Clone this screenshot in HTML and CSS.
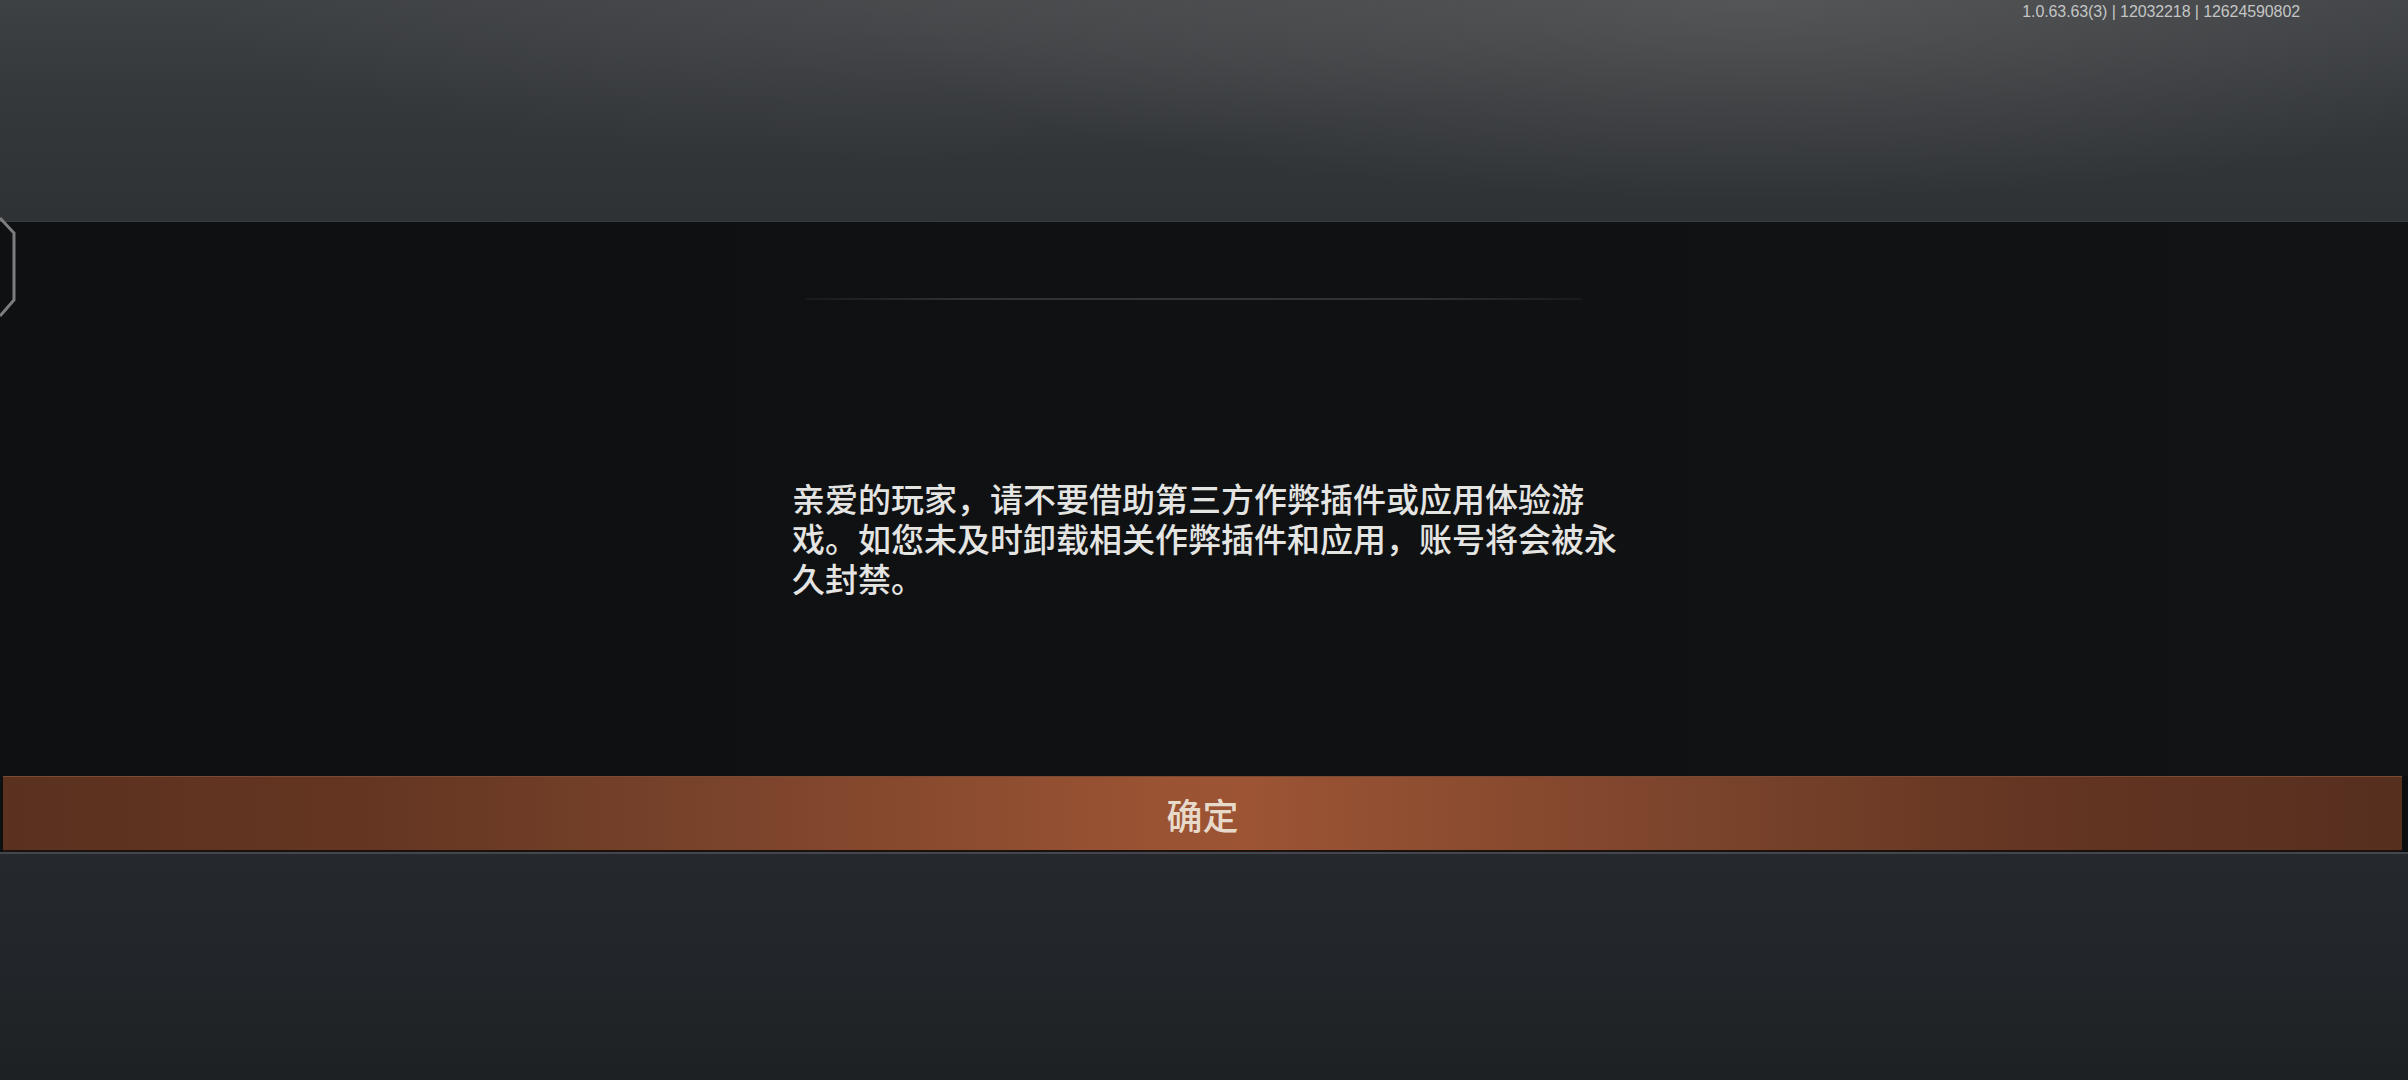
FILE: index.html
```html
<!DOCTYPE html>
<html lang="zh-CN">
<head>
<meta charset="utf-8">
<title>提示</title>
<link rel="stylesheet" href="styles.css">
</head>
<body>
<div class="screen">
  <header class="top-band">
    <div class="version">1.0.63.63(3) | 12032218 | 12624590802</div>
  </header>
  <section class="panel">
    <svg class="hex" width="20" height="104" viewBox="0 0 20 104" aria-hidden="true">
      <polyline points="0,2 14,17 14,84 0,100" fill="none" stroke="#7b7d7e" stroke-width="3"/>
    </svg>
    <div class="divider"></div>
    <p class="message">亲爱的玩家，请不要借助第三方作弊插件或应用体验游<br>戏。如您未及时卸载相关作弊插件和应用，账号将会被永<br>久封禁。</p>
  </section>
  <div class="button-row">
    <button class="confirm">确定</button>
  </div>
  <footer class="bottom-band"></footer>
</div>
</body>
</html>
```

FILE: styles.css
```css
html, body {
  margin: 0;
  padding: 0;
  background: #0e1011;
}

body {
  width: 2408px;
  height: 1080px;
  overflow: hidden;
  font-family: "Noto Sans CJK SC", "Noto Sans", sans-serif;
}

.screen {
  display: flex;
  flex-direction: column;
  width: 2408px;
  height: 1080px;
}

.top-band {
  height: 222px;
  display: flex;
  justify-content: flex-end;
  align-items: flex-start;
  padding-right: 108px;
  background:
    radial-gradient(ellipse 900px 200px at 1750px 0px, rgba(110, 110, 110, 0.45), rgba(110, 110, 110, 0) 100%),
    radial-gradient(ellipse 700px 160px at 900px 0px, rgba(90, 90, 92, 0.35), rgba(90, 90, 92, 0) 100%),
    linear-gradient(to bottom, #3e4144 0%, #35383b 45%, #2f3235 100%);
  border-bottom: 1px solid #3a3d40;
  box-sizing: border-box;
}

.version {
  margin-top: 1px;
  font-family: "Liberation Sans", Arial, sans-serif;
  font-size: 16px;
  line-height: 22px;
  color: #c4c5c5;
  letter-spacing: -0.1px;
}

.panel {
  position: relative;
  height: 554px;
  background:
    linear-gradient(to right, #0e1011 0%, #0f1112 60%, #111314 100%);
  display: flex;
  flex-direction: column;
  align-items: flex-start;
}

.hex {
  position: absolute;
  left: 0;
  top: -6px;
}

.divider {
  margin-top: 76px;
  margin-left: 806px;
  width: 776px;
  height: 2px;
  background: linear-gradient(to right, rgba(60, 62, 64, 0.2) 0%, #2e3032 20%, #333537 50%, #2e3032 80%, rgba(60, 62, 64, 0.2) 100%);
}

.message {
  margin: 178px 0 0 792px;
  font-size: 33px;
  line-height: 40px;
  color: #e4e4e2;
  font-weight: 500;
  white-space: nowrap;
}

.button-row {
  height: 76px;
  background: #0d0f10;
  display: flex;
  padding: 0 6px 0 3px;
}

.confirm {
  flex: 1;
  height: 76px;
  margin: 0;
  border: none;
  border-top: 1px solid #7a4a33;
  border-bottom: 2px solid #1c110c;
  box-sizing: border-box;
  background: linear-gradient(to right, #5a311f 0%, #643622 15%, #7a432b 30%, #9a5333 48%, #9c5434 52%, #7c442c 70%, #633522 85%, #572f1f 100%);
  color: #e8dacb;
  font-family: "Noto Sans CJK SC", sans-serif;
  font-size: 36px;
  font-weight: 500;
  line-height: 72px;
  padding: 0;
  text-align: center;
}

.bottom-band {
  flex: 1;
  border-top: 2px solid #43464d;
  background:
    linear-gradient(to bottom, #25282c 0%, #222529 50%, #1e2124 100%);
}
```
